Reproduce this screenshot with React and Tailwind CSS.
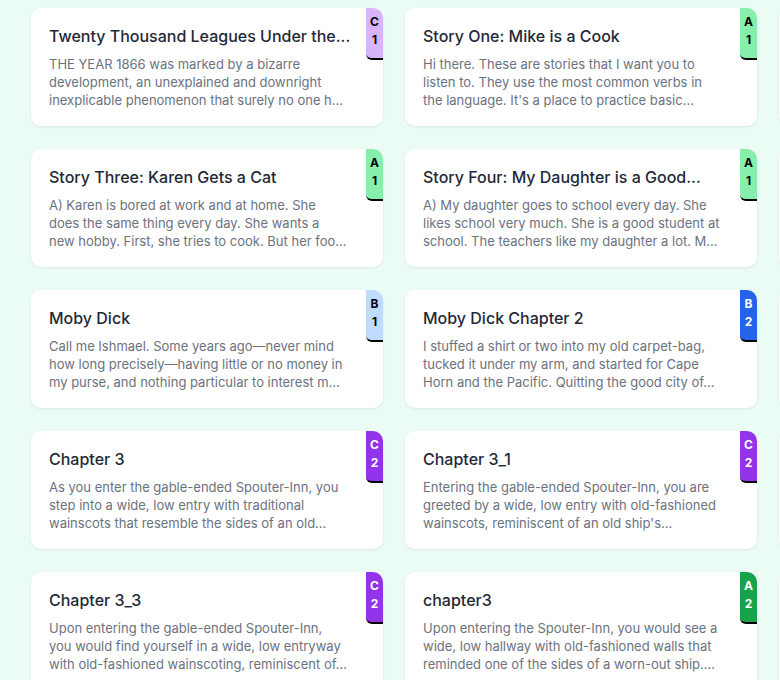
import React from "react";

const badgeStyles = {
  C1: "bg-[#d8b4fe] text-black",
  A1: "bg-[#86efac] text-black",
  B1: "bg-[#bfdbfe] text-black",
  B2: "bg-[#2563eb] text-white",
  C2: "bg-[#9333ea] text-white",
  A2: "bg-[#16a34a] text-white",
};

const stories = [
  {
    title: "Twenty Thousand Leagues Under the...",
    lines: [
      "THE YEAR 1866 was marked by a bizarre",
      "development, an unexplained and downright",
      "inexplicable phenomenon that surely no one h...",
    ],
    level: "C1",
  },
  {
    title: "Story One: Mike is a Cook",
    lines: [
      "Hi there. These are stories that I want you to",
      "listen to. They use the most common verbs in",
      "the language. It's a place to practice basic...",
    ],
    level: "A1",
  },
  {
    title: "Story Two: Sarah Buys a Dress",
    lines: ["Sarah wants a new dress for the party.", "She goes to the store with her friend.", "They look at many..."],
    level: "A1",
  },
  {
    title: "Story Three: Karen Gets a Cat",
    lines: [
      "A) Karen is bored at work and at home. She",
      "does the same thing every day. She wants a",
      "new hobby. First, she tries to cook. But her foo...",
    ],
    level: "A1",
  },
  {
    title: "Story Four: My Daughter is a Good...",
    lines: [
      "A) My daughter goes to school every day. She",
      "likes school very much. She is a good student at",
      "school. The teachers like my daughter a lot. M...",
    ],
    level: "A1",
  },
  {
    title: "Story Five",
    lines: ["Some text here.", "More text here.", "And more..."],
    level: "A1",
  },
  {
    title: "Moby Dick",
    lines: [
      "Call me Ishmael. Some years ago\u2014never mind",
      "how long precisely\u2014having little or no money in",
      "my purse, and nothing particular to interest m...",
    ],
    level: "B1",
  },
  {
    title: "Moby Dick Chapter 2",
    lines: [
      "I stuffed a shirt or two into my old carpet-bag,",
      "tucked it under my arm, and started for Cape",
      "Horn and the Pacific. Quitting the good city of...",
    ],
    level: "B2",
  },
  {
    title: "Moby Dick Chapter 3",
    lines: ["Some text here.", "More text here.", "And more..."],
    level: "B2",
  },
  {
    title: "Chapter 3",
    lines: [
      "As you enter the gable-ended Spouter-Inn, you",
      "step into a wide, low entry with traditional",
      "wainscots that resemble the sides of an old...",
    ],
    level: "C2",
  },
  {
    title: "Chapter 3_1",
    lines: [
      "Entering the gable-ended Spouter-Inn, you are",
      "greeted by a wide, low entry with old-fashioned",
      "wainscots, reminiscent of an old ship's...",
    ],
    level: "C2",
  },
  {
    title: "Chapter 3_2",
    lines: ["Some text here.", "More text here.", "And more..."],
    level: "C2",
  },
  {
    title: "Chapter 3_3",
    lines: [
      "Upon entering the gable-ended Spouter-Inn,",
      "you would find yourself in a wide, low entryway",
      "with old-fashioned wainscoting, reminiscent of...",
    ],
    level: "C2",
  },
  {
    title: "chapter3",
    lines: [
      "Upon entering the Spouter-Inn, you would see a",
      "wide, low hallway with old-fashioned walls that",
      "reminded one of the sides of a worn-out ship....",
    ],
    level: "A2",
  },
  {
    title: "chapter4",
    lines: ["Some text here.", "More text here.", "And more..."],
    level: "A2",
  },
];

function Card({ title, lines, level }) {
  return (
    <div className="relative bg-white rounded-[10px] shadow-[0_1px_3px_rgba(0,0,0,0.08)] h-[118px] pl-[18px] pr-[36px] pt-4 pb-[17px] shrink-0">
      <div className="whitespace-nowrap text-[16px] leading-6 font-medium text-[#1f2937]">{title}</div>
      <p className="mt-[7px] text-[13px] leading-[18px] text-[#6b7280]">
        {lines.map((l, i) => (
          <span key={i} className="block whitespace-nowrap">
            {l}
          </span>
        ))}
      </p>
      <div
        className={`absolute top-0 right-0 w-[17px] h-[52px] rounded-tr-[10px] rounded-bl-md border-b-2 border-black flex flex-col items-center pt-[5px] text-[12px] font-bold leading-[18px] ${badgeStyles[level]}`}
      >
        <span>{level[0]}</span>
        <span>{level[1]}</span>
      </div>
    </div>
  );
}

export default function App() {
  return (
    <div
      className="w-[780px] h-[680px] overflow-hidden bg-[#ebfcf4]"
      style={{ fontFamily: "Inter, 'Noto Sans', sans-serif" }}
    >
      <div className="grid grid-cols-[352px_352px_352px] gap-x-[22px] gap-y-[23px] pl-[31px] pt-2">
        {stories.map((s, i) => (
          <Card key={i} {...s} />
        ))}
      </div>
    </div>
  );
}
